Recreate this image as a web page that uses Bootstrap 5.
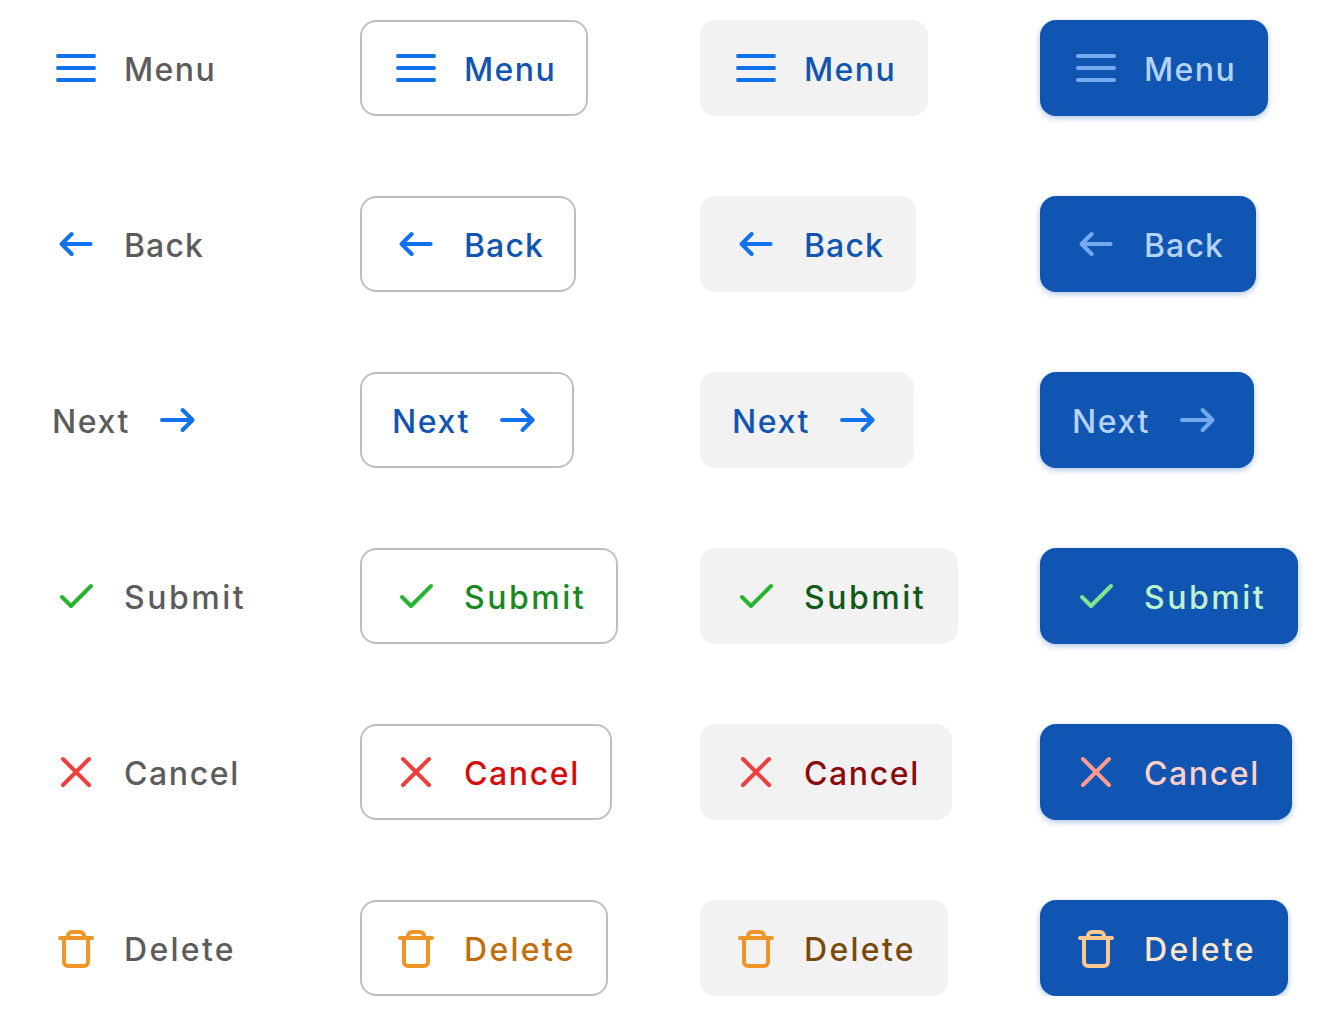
<!DOCTYPE html>
<html lang="en">
  <head>
    <meta charset="UTF-8" />
    <meta name="viewport" content="width=device-width, initial-scale=1.0" />
    <title>Icon Buttons</title>
    <link
      href="https://cdn.jsdelivr.net/npm/bootstrap@5.3.0/dist/css/bootstrap.min.css"
      rel="stylesheet"
    />
    <style>
      body {
        background: #fff;
        font-family: Inter, "Liberation Sans", sans-serif;
      }
      .demo-grid {
        display: grid;
        grid-template-columns: 340px 340px 340px auto;
        grid-auto-rows: 96px;
        row-gap: 80px;
        padding: 20px 0 0 20px;
        justify-items: start;
      }
      .act {
        display: inline-flex;
        align-items: center;
        gap: 24px;
        height: 96px;
        padding: 0 30px;
        border: 2px solid transparent;
        border-radius: 16px;
        font-size: 32px;
        font-weight: 500;
        line-height: 1;
        white-space: nowrap;
      }
      .act svg {
        width: 48px;
        height: 48px;
        flex: none;
        fill: none;
        stroke: var(--ico);
        stroke-width: 2;
        stroke-linecap: round;
        stroke-linejoin: round;
      }
      .act-text {
        padding-top: 3px;
      }

      .plain { background: transparent; color: #5c5c5c; }
      .outline { background: #fff; border-color: #bfbfbf; }
      .tint { background: #f2f2f2; border-color: #f2f2f2; }
      .solid {
        background: #0f55b1;
        border-color: #0f55b1;
        box-shadow: 0 2px 6px rgba(15, 85, 177, 0.35);
      }

      .blue { --ico: #1271ee; }
      .green { --ico: #26b52f; }
      .red { --ico: #f23d3d; }
      .orange { --ico: #ef9526; }

      .blue.outline, .blue.tint { color: #0f55b1; }
      .green.outline { color: #1a8a20; }
      .green.tint { color: #10591a; }
      .red.outline { color: #d60b0b; }
      .red.tint { color: #8c0a0a; }
      .orange.outline { color: #c26d0c; }
      .orange.tint { color: #7a4a0c; }

      .blue.solid { color: #b5d3fa; --ico: #75a9f0; }
      .green.solid { color: #c0f2cc; --ico: #7fe68f; }
      .red.solid { color: #ffcfca; --ico: #ff9a90; }
      .orange.solid { color: #fde6cb; --ico: #fcc88e; }
    </style>
  </head>
  <body>
    <svg class="d-none">
      <symbol id="i-menu" viewBox="0 0 24 24"><path d="M3 6h18M3 12h18M3 18h18" /></symbol>
      <symbol id="i-back" viewBox="0 0 24 24"><path d="M19.300 12H4.800M9.800 7l-5 5 5 5" /></symbol>
      <symbol id="i-next" viewBox="0 0 24 24"><path d="M4 12h15.300M14.300 7l5 5-5 5" /></symbol>
      <symbol id="i-check" viewBox="0 0 24 24"><path d="M5 12.500 9.500 17l10-10" /></symbol>
      <symbol id="i-x" viewBox="0 0 24 24"><path d="M5.500 5.500l13 13M18.500 5.500l-13 13" /></symbol>
      <symbol id="i-trash" viewBox="0 0 24 24"><path d="M4 7h16M6 7v12a2 2 0 0 0 2 2h8a2 2 0 0 0 2-2V7M8 7V6a2 2 0 0 1 2-2h4a2 2 0 0 1 2 2v1" /></symbol>
    </svg>

    <div class="demo-grid" id="grid"></div>

    <script src="https://cdn.jsdelivr.net/npm/bootstrap@5.3.0/dist/js/bootstrap.bundle.min.js"></script>
    <script>
      // label, icon, tone, tracking in px
      const rows = [
        ["Menu", "i-menu", "blue", 1.4],
        ["Back", "i-back", "blue", 1.1],
        ["Next", "i-next", "blue", 1.6],
        ["Submit", "i-check", "green", 2.5],
        ["Cancel", "i-x", "red", 1.6],
        ["Delete", "i-trash", "orange", 2.3],
      ];
      const looks = ["plain", "outline", "tint", "solid"];

      let html = "";
      rows.forEach(([label, icon, tone, track]) => {
        looks.forEach((look) => {
          const svg = `<svg><use href="#${icon}"></use></svg>`;
          const text = `<span class="act-text" style="letter-spacing: ${track}px">${label}</span>`;
          const inner = label === "Next" ? text + svg : svg + text;
          html += `<button type="button" class="act ${look} ${tone}">${inner}</button>`;
        });
      });
      document.getElementById("grid").innerHTML = html;
    </script>
  </body>
</html>
